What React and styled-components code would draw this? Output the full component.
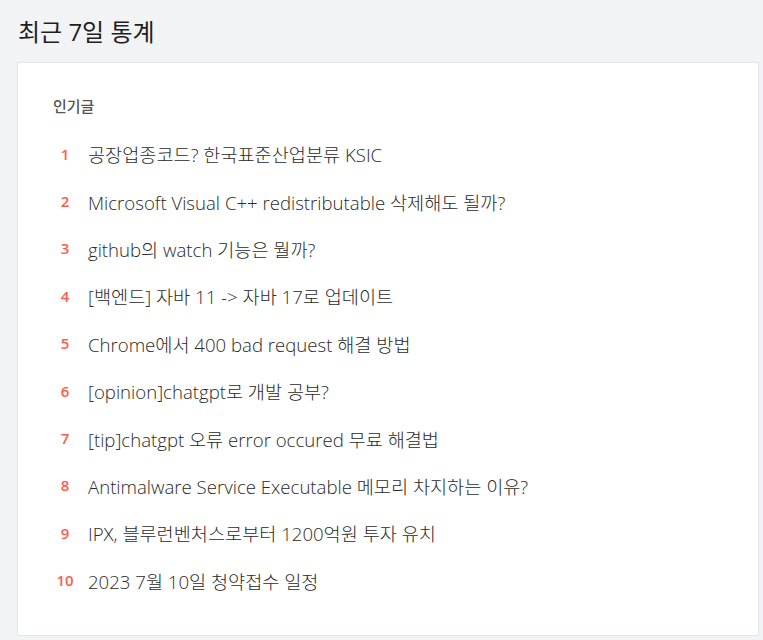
import styled, { createGlobalStyle } from 'styled-components';

const GlobalStyle = createGlobalStyle`
    body {
        margin: 0;
        background: #f2f3f5;
        font-family: "Open Sans", "Noto Sans CJK KR", sans-serif;
    }
`;

const posts = [
    '공장업종코드? 한국표준산업분류 KSIC',
    'Microsoft Visual C++ redistributable 삭제해도 될까?',
    'github의 watch 기능은 뭘까?',
    '[백엔드] 자바 11 -> 자바 17로 업데이트',
    'Chrome에서 400 bad request 해결 방법',
    '[opinion]chatgpt로 개발 공부?',
    '[tip]chatgpt 오류 error occured 무료 해결법',
    'Antimalware Service Executable 메모리 차지하는 이유?',
    'IPX, 블루런벤처스로부터 1200억원 투자 유치',
    '2023 7월 10일 청약접수 일정',
];

const Page = styled.main`
    padding: 16px 4px 3px 17px;
`;

const Title = styled.h1`
    margin: 0 0 14px 1px;
    font-size: 24px;
    font-weight: 400;
    line-height: 32px;
    color: #1e1e1e;
`;

const Card = styled.section`
    background: #fff;
    border: 1px solid #e2e5ec;
    padding: 33px 36px 30px 36px;
    height: 574px;
    box-sizing: border-box;
`;

const Heading = styled.h2`
    margin: 0 0 14px -1px;
    font-size: 15px;
    font-weight: 500;
    line-height: 20px;
    color: #555;
`;

const List = styled.ol`
    list-style: none;
    margin: 0;
    padding: 0;
`;

const Item = styled.li`
    display: flex;
    align-items: center;
    height: 47.4px;
`;

const Rank = styled.span`
    width: 22px;
    margin-right: 12px;
    text-align: center;
    font-size: 15px;
    font-weight: 600;
    color: #ff5b4c;
`;

const PostTitle = styled.span`
    font-size: 18.6px;
    font-weight: 300;
    color: #2a2a2a;
`;

export default function App() {
    return (
        <>
            <GlobalStyle />
            <Page>
                <Title>최근 7일 통계</Title>
                <Card>
                    <Heading>인기글</Heading>
                    <List>
                        { posts.map((post, i) => (
                            <Item key={i}>
                                <Rank>{ i + 1 }</Rank>
                                <PostTitle>{ post }</PostTitle>
                            </Item>
                        )) }
                    </List>
                </Card>
            </Page>
        </>
    );
};
